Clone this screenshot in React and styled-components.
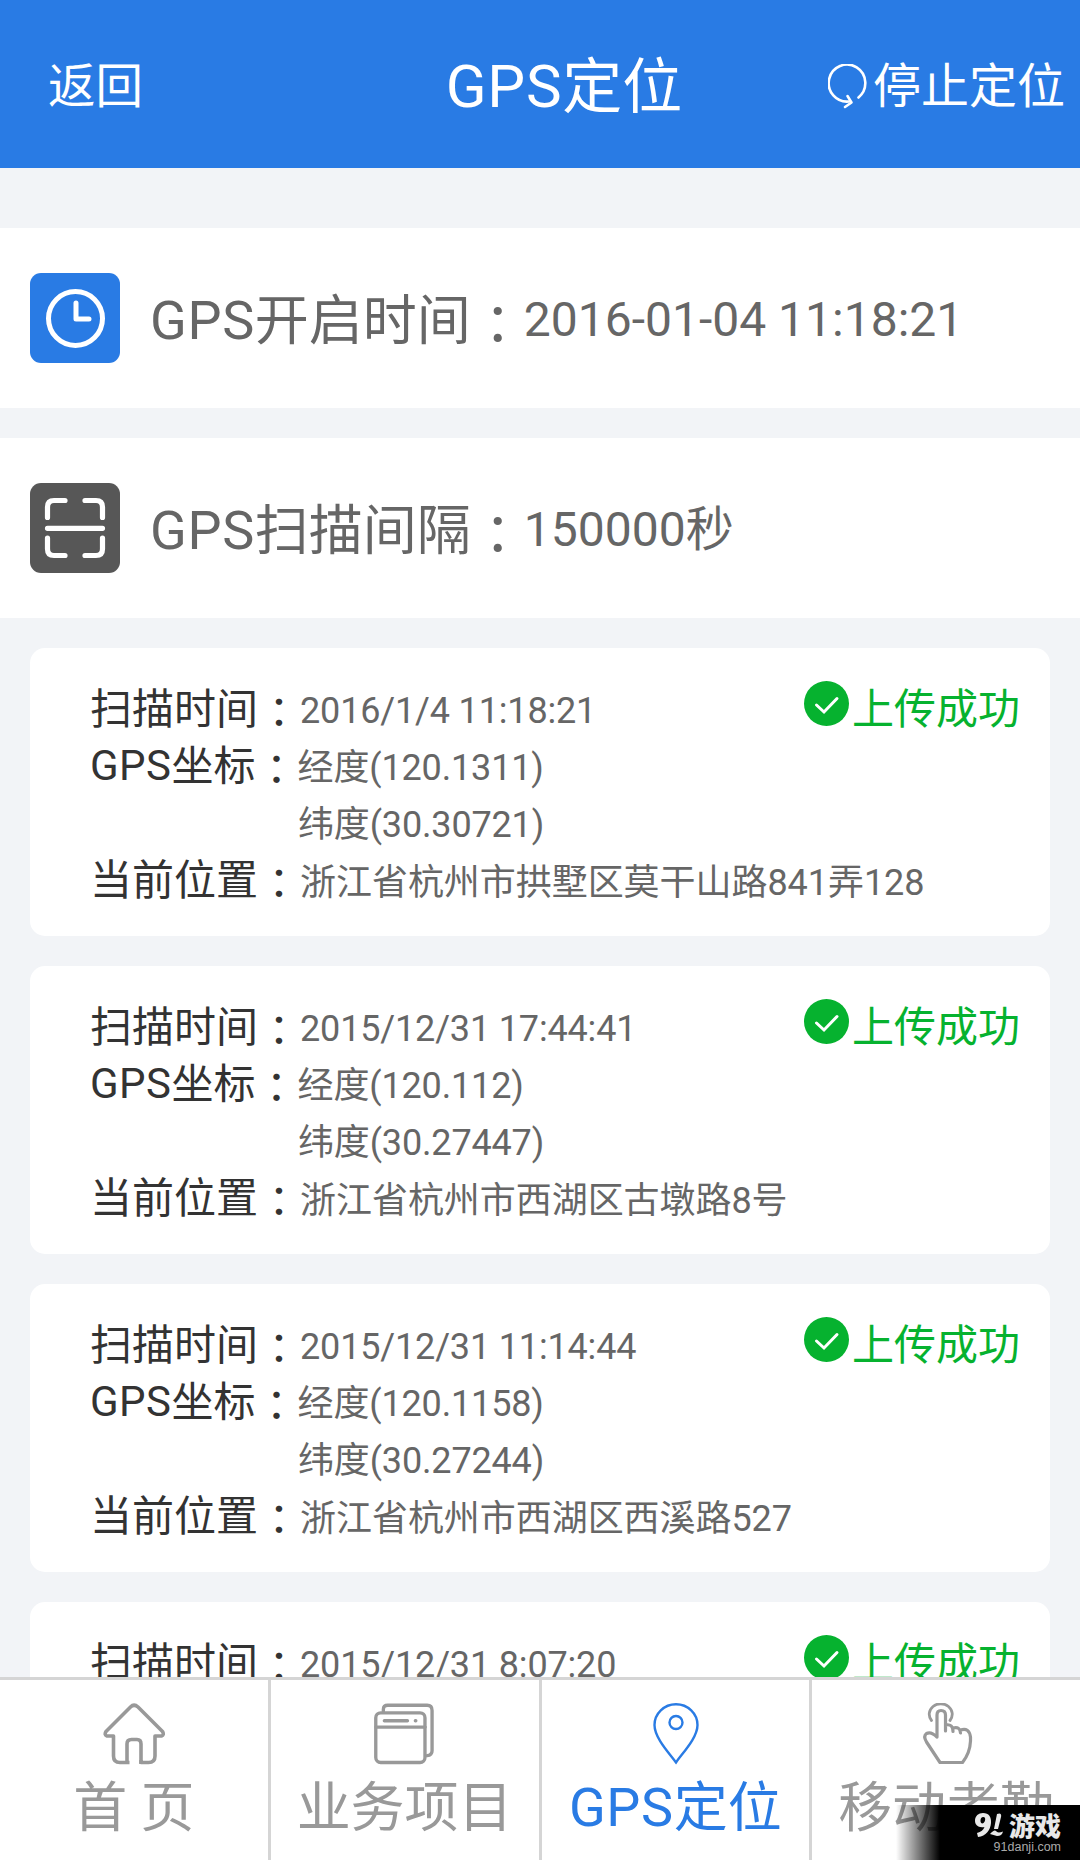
import React from 'react';
import styled, { createGlobalStyle } from 'styled-components';

const GlobalStyle = createGlobalStyle`
    body {
        margin: 0;
        font-family: Roboto, "Noto Sans CJK SC", sans-serif;
    }
    svg { display: block; flex: none; }
`;
const Page = styled.div`
    display: flex;
    flex-direction: column;
    width: 1080px;
    height: 1860px;
    overflow: hidden;
    position: relative;
    background: #f2f4f7;
`;
const Header = styled.header`
    display: grid;
    grid-template-columns: 300px 1fr 252px;
    align-items: center;
    flex: none;
    box-sizing: border-box;
    height: 168px;
    padding-top: 6px;
    color: white;
    background: #297be4;
`;
const BackButton = styled.div`
    padding-left: 48px;
    font-size: 47.5px;
    line-height: 60px;
`;
const Title = styled.h1`
    margin: 0;
    padding-top: 2px;
    font-size: 60px;
    font-weight: 400;
    line-height: 72px;
    text-align: center;
`;
const StopButton = styled.div`
    display: flex;
    align-items: center;
    gap: 6px;
    font-size: 48px;
    line-height: 60px;
    white-space: nowrap;
`;
const Settings = styled.section`
    display: flex;
    flex-direction: column;
    flex: none;
    gap: 30px;
    margin: 60px 0 30px;
`;
const SettingRow = styled.div`
    display: flex;
    align-items: center;
    height: 180px;
    padding-left: 30px;
    background: white;
    color: #666;
`;
const SettingLabel = styled.div`
    padding: 7px 0 0 30px;
    font-size: 54px;
    line-height: 64px;
    white-space: nowrap;
`;
const SettingValue = styled.div`
    margin-left: -1px;
    padding-top: 3px;
    font-size: 48px;
    line-height: 64px;
`;
/* latin letters sit a little above the ideographs */
const Latin = styled.span`
    line-height: 1;
    letter-spacing: 0.012em;
    vertical-align: 1px;
`;
/* the TC face centres the full-width colon in its cell */
const ColonBox = styled.span`
    font-family: "Noto Sans CJK TC", sans-serif;
    line-height: 1;
    vertical-align: -0.09em;
`;
const RecordList = styled.section`
    display: flex;
    flex-direction: column;
    flex: 1;
    gap: 30px;
    min-height: 0;
    overflow: hidden;
    padding: 0 30px;
`;
const Card = styled.article`
    display: flex;
    flex: none;
    box-sizing: border-box;
    height: 288px;
    padding: 33px 30px 0 60px;
    border-radius: 15px;
    background: white;
`;
const Fields = styled.div`
    flex: 1;
    min-width: 0;
`;
const Field = styled.div`
    height: 57px;
    padding-left: ${(props)=>props.$indent || 0}px;
    font-size: 42px;
    line-height: 57px;
    color: #333;
    white-space: nowrap;
`;
const FieldValue = styled.span`
    font-size: 36px;
    line-height: 1;
    letter-spacing: ${(props)=>props.$place ? -0.05 : -0.16}px;
    vertical-align: ${(props)=>props.$place ? 0 : 1}px;
    color: #666;
`;
const Status = styled.div`
    display: flex;
    flex: none;
    gap: 3px;
    height: 57px;
    font-size: 42px;
    line-height: 57px;
    white-space: nowrap;
    color: #06b22f;
`;
const TabBar = styled.nav`
    display: flex;
    flex: none;
    height: 180px;
    border-top: 3px solid #d5d5d5;
    background: white;
`;
const Tab = styled.div`
    display: flex;
    flex-direction: column;
    align-items: center;
    flex: 1;
    padding-top: 23px;
    border-right: 3px solid #d5d5d5;
    font-size: 54px;
    line-height: 66px;
    white-space: pre;
    color: ${(props)=>props.$active ? '#297be4' : '#999'};
    &:last-child { border-right: none; }
`;
const TabText = styled.span`
    margin-top: 11px;
`;
const Watermark = styled.div`
    position: absolute;
    right: 0;
    bottom: 0;
    display: flex;
    flex-direction: column;
    align-items: flex-end;
    box-sizing: border-box;
    width: 184px;
    height: 55px;
    padding: 6px 19px 0 0;
    background: linear-gradient(to right, transparent, black 44px);
`;
const WatermarkBrand = styled.div`
    display: flex;
    align-items: center;
    gap: 4px;
    font: 900 26px/28px "Noto Sans CJK SC", sans-serif;
    color: #e8e8e8;
`;
const WatermarkSite = styled.div`
    font: 12.5px/16px "Liberation Sans", sans-serif;
    color: #aaa;
`;

const records = [
    { time: '2016/1/4 11:18:21', lng: '120.1311', lat: '30.30721', place: '浙江省杭州市拱墅区莫干山路841弄128' },
    { time: '2015/12/31 17:44:41', lng: '120.112', lat: '30.27447', place: '浙江省杭州市西湖区古墩路8号' },
    { time: '2015/12/31 11:14:44', lng: '120.1158', lat: '30.27244', place: '浙江省杭州市西湖区西溪路527' },
    { time: '2015/12/31 8:07:20' },
];

const Colon = () => <ColonBox>：</ColonBox>;

const RefreshIcon = () => (
    <svg width="39" height="46" viewBox="0 2.5 39 46" fill="none" stroke="white" strokeWidth="2.6" strokeLinecap="round" strokeLinejoin="round">
        <path d="M30.5 36A18.3 18.5 0 1 0 21 40" />
        <path d="M19.5 34.5L23.5 41L17 45.5" />
    </svg>
);
const ClockIcon = () => (
    <svg width="90" height="90" fill="none" stroke="white" strokeWidth="5">
        <rect width="90" height="90" rx="11" fill="#297be4" stroke="none" />
        <circle cx="45.5" cy="45.5" r="27" />
        <path d="M46 30V46H59" strokeLinecap="round" strokeLinejoin="round" />
    </svg>
);
const ScanIcon = () => (
    <svg width="90" height="90" fill="none" stroke="white" strokeWidth="5.2" strokeLinecap="round">
        <rect width="90" height="90" rx="11" fill="#575757" stroke="none" />
        <path d="M17.5 34.5V24Q17.5 17.5 24 17.5H35M55 17.5H66Q72.5 17.5 72.5 24V34.5M17.5 55V66Q17.5 72.5 24 72.5H35M55 72.5H66Q72.5 72.5 72.5 66V55M17.5 45.3H72.5" />
    </svg>
);
const CheckIcon = () => (
    <svg width="45" height="45" fill="none">
        <circle cx="22.5" cy="22.5" r="22.5" fill="#06b22f" />
        <path d="M12.5 24L20 31L33 17.5" stroke="white" strokeWidth="3" strokeLinecap="round" />
    </svg>
);
const HomeIcon = () => (
    <svg width="62" height="62" fill="none" stroke="#999" strokeWidth="3.6" strokeLinejoin="round">
        <path d="M26.5 59.5H17Q10.5 59.5 10.5 53V33H4Q1 32 3 28.5L27.5 4Q31 .5 35 4L59.5 28.5Q61.5 32 58.5 33H52V53Q52 59.5 45.5 59.5H38V41Q38 36.5 34 36.5H28.5Q24 36.5 24 41V61" />
        <path d="M38 57V61" />
    </svg>
);
const ProjectIcon = () => (
    <svg width="62" height="62" viewBox="0 0 63 62" fill="none" stroke="#999" strokeWidth="3.4" strokeLinecap="round">
        <rect x="1.8" y="9.5" width="50" height="50.5" rx="5" />
        <path d="M9.5 8V6Q9.5 1.8 14 1.8H54Q59 1.8 59 7V48Q59 52.5 54 53" />
        <path d="M2 24H52M10.5 17.5H34M42 17.5H42.5" />
    </svg>
);
const PinIcon = () => (
    <svg width="62" height="62" fill="none" stroke="#297be4" strokeWidth="2.4">
        <path d="M32 59.5C25.5 50.500 10.500 35 10.500 22A21.5 20.8 0 0 1 53.500 22C53.500 35 38 50.500 32 59.5Z" />
        <circle cx="32" cy="19.5" r="6.5" />
    </svg>
);
const TouchIcon = () => (
    <svg width="62" height="62" fill="none" stroke="#999" strokeWidth="3.2" strokeLinejoin="round" strokeLinecap="round">
        <path d="M22 34V12Q22 7.5 26 7.5Q30.5 7.5 30.5 12V28M30.5 22Q38 20.5 38 28.5M38 25Q45 23 45.5 30M45.5 27Q54 24 55.5 34V38Q55 50 47.5 59.5H25L11.5 39Q8 33 11.500 30.5Q16 28 22 34" />
        <path d="M16.5 17.5A11.500 10.5 0 1 1 35 17.5" strokeWidth="2.8" />
    </svg>
);
const BrandMark = () => (
    <svg width="30" height="24" fill="#e8e8e8">
        <path fillRule="evenodd" d="M8 0C14 0 16.500 4 16 10C15.500 17 11 23 3 24L2 20C6 19 8.500 17 9.500 14C3 15 0 12 0 7.500C0 3 3.500 0 8 0ZM8.500 4C6 4 5.500 6 5.500 8C5.500 10 7 11 8.500 10C10.500 8.500 11 4 8.500 4Z" />
        <path d="M22 1Q27 -1 26 4L23 16H19Z" />
        <path d="M15 21Q20 15 22 19Q24 20 28 18.500Q27 23 22 23Z" />
    </svg>
);

function App(){
    return(
        <>
            <GlobalStyle />
            <Page>
                <Header>
                    <BackButton>返回</BackButton>
                    <Title><Latin>GPS</Latin>定位</Title>
                    <StopButton><RefreshIcon />停止定位</StopButton>
                </Header>
                <Settings>
                    <SettingRow>
                        <ClockIcon />
                        <SettingLabel><Latin>GPS</Latin>开启时间<Colon /></SettingLabel>
                        <SettingValue>2016-01-04 11:18:21</SettingValue>
                    </SettingRow>
                    <SettingRow>
                        <ScanIcon />
                        <SettingLabel><Latin>GPS</Latin>扫描间隔<Colon /></SettingLabel>
                        <SettingValue>150000秒</SettingValue>
                    </SettingRow>
                </Settings>
                <RecordList>
                    {records.map( (item,index)=><Card key={index}>
                        <Fields>
                            <Field>扫描时间<Colon /><FieldValue>{item.time}</FieldValue></Field>
                            {item.place && (
                            <>
                            <Field><Latin>GPS</Latin>坐标<Colon /><FieldValue>经度({item.lng})</FieldValue></Field>
                            <Field $indent={208}><FieldValue>纬度({item.lat})</FieldValue></Field>
                            <Field>当前位置<Colon /><FieldValue $place>{item.place}</FieldValue></Field>
                            </>
                            )}
                        </Fields>
                        <Status><CheckIcon />上传成功</Status>
                    </Card>)}
                </RecordList>
                <TabBar>
                    <Tab><HomeIcon /><TabText>首 页</TabText></Tab>
                    <Tab><ProjectIcon /><TabText>业务项目</TabText></Tab>
                    <Tab $active><PinIcon /><TabText><Latin>GPS</Latin>定位</TabText></Tab>
                    <Tab><TouchIcon /><TabText>移动考勤</TabText></Tab>
                </TabBar>
                <Watermark>
                    <WatermarkBrand><BrandMark />游戏</WatermarkBrand>
                    <WatermarkSite>91danji.com</WatermarkSite>
                </Watermark>
            </Page>
        </>
    )
}
export default App;
